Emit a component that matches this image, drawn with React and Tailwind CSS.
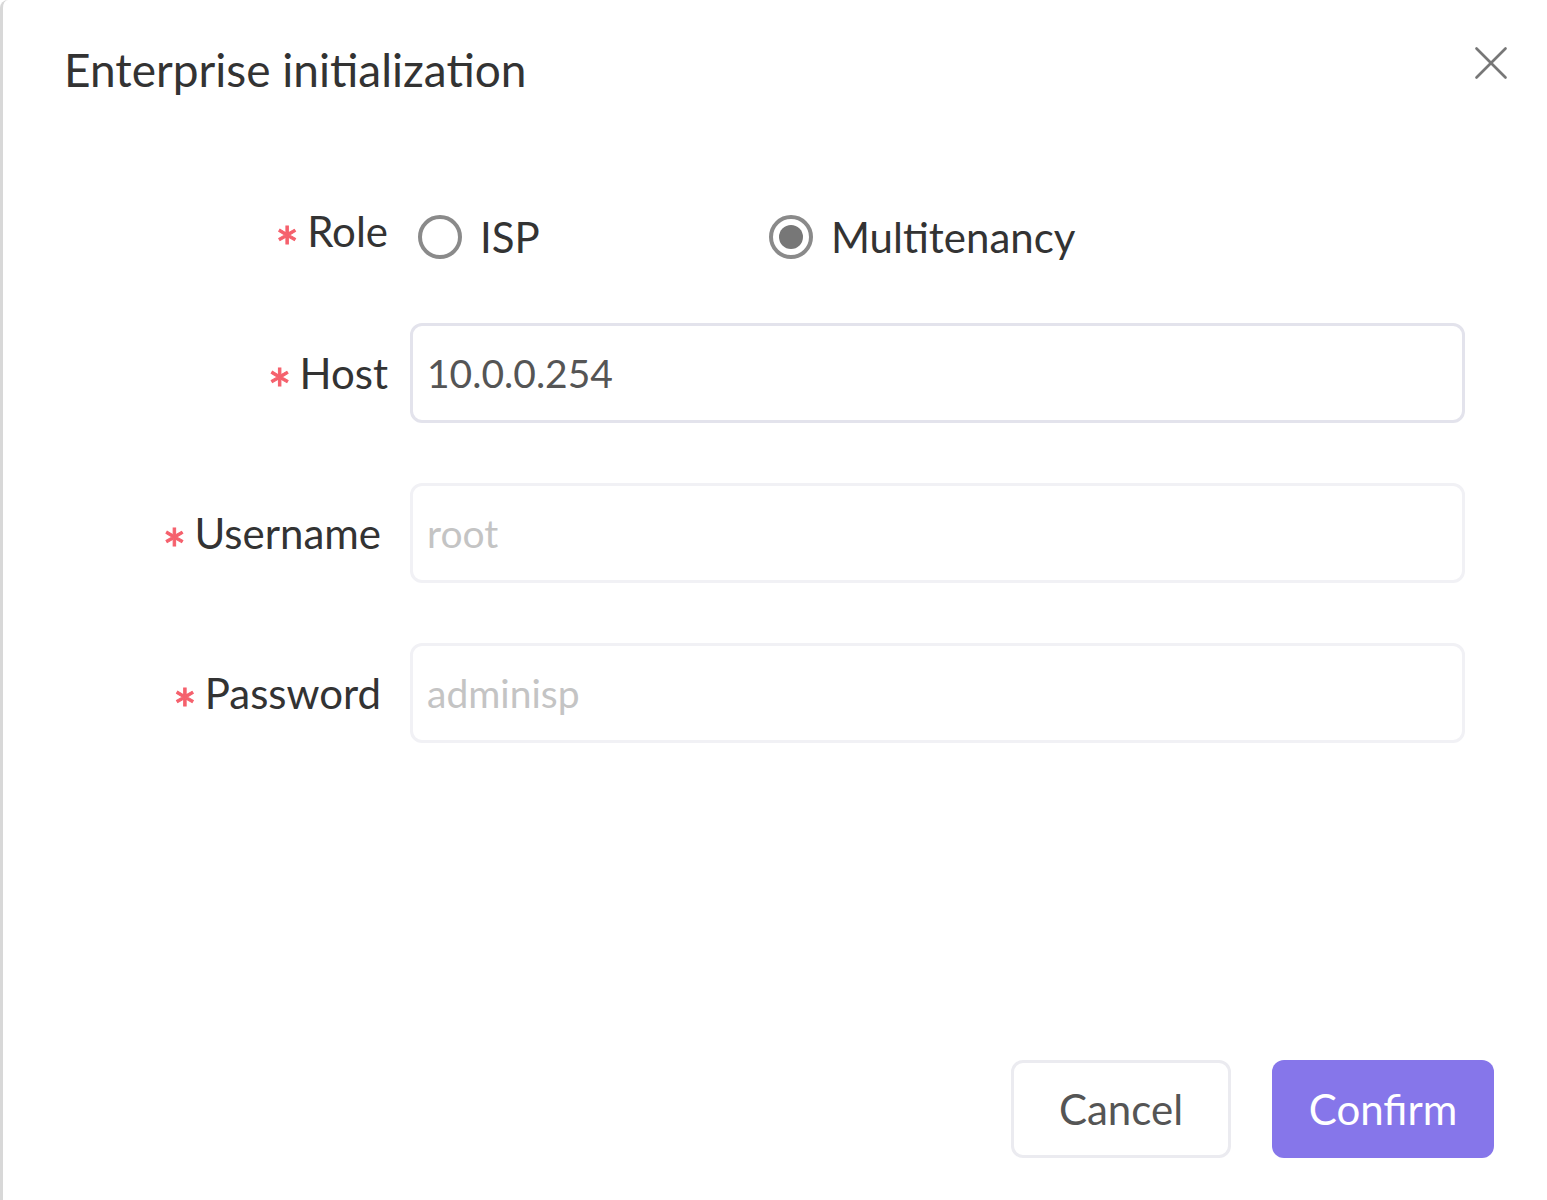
import { X } from 'lucide-react';

const inputBase =
    'flex-1 h-[100px] rounded-xl border-[3px] bg-white px-[14px] text-[39px] outline-none';

function Label({ children, pr = 'pr-[22px]' }) {
    return (
        <div className={`w-[407px] shrink-0 flex justify-end items-center ${pr}`}>
            <span className="text-[#f5616d] text-[56px] leading-none mr-[8px] translate-y-[16px] [-webkit-text-stroke:1px_#f5616d]">*</span>
            <span className="text-[42px] text-[#333]">{children}</span>
        </div>
    );
}

function Radio({ checked, label }) {
    return (
        <label className="flex items-center gap-[18px]">
            <span className="w-[44px] h-[44px] rounded-full border-[4px] border-[#8a8a8a] bg-white flex items-center justify-center">
                {checked && <span className="w-[24px] h-[24px] rounded-full bg-[#777]" />}
            </span>
            <span className="text-[42px] text-[#333]">{label}</span>
        </label>
    );
}

export default function App() {
    return (
        <div
            className="w-[1547px] h-[1200px] bg-white border-l-[3px] border-[#d8d8d8] rounded-tl-lg overflow-hidden flex flex-col"
            style={{ fontFamily: 'Lato, "Open Sans", sans-serif' }}
        >
            <div className="flex items-start justify-between pl-[61px] pr-[27px] pt-[40px]">
                <h2 className="text-[46px] text-[#333] leading-[60px]">Enterprise initialization</h2>
                <button className="-mt-[6px] text-[#777]">
                    <X className="w-[58px] h-[58px]" strokeWidth={1.1} />
                </button>
            </div>

            <div className="flex flex-col pr-[82px] mt-[97px]">
                <div className="flex items-center h-[80px]">
                    <div className="-translate-y-[6px]">
                        <Label>Role</Label>
                    </div>
                    <div className="flex items-center ml-[8px]">
                        <div className="w-[351px]">
                            <Radio label="ISP" />
                        </div>
                        <Radio checked label="Multitenancy" />
                    </div>
                </div>

                <div className="flex items-center mt-[46px]">
                    <Label>Host</Label>
                    <input
                        className={`${inputBase} border-[#e3e3ec] text-[#555]`}
                        defaultValue="10.0.0.254"
                    />
                </div>

                <div className="flex items-center mt-[60px]">
                    <Label pr="pr-[29px]">Username</Label>
                    <input
                        className={`${inputBase} border-[#f1f1f5] placeholder:text-[#c4c4c4]`}
                        placeholder="root"
                    />
                </div>

                <div className="flex items-center mt-[60px]">
                    <Label pr="pr-[29px]">Password</Label>
                    <input
                        className={`${inputBase} border-[#f1f1f5] placeholder:text-[#c4c4c4]`}
                        placeholder="adminisp"
                    />
                </div>
            </div>

            <div className="flex justify-end gap-[41px] pr-[53px] mt-auto mb-[42px]">
                <button className="w-[220px] h-[98px] rounded-xl border-[3px] border-[#ebebf0] bg-white text-[42px] text-[#555]">
                    Cancel
                </button>
                <button className="w-[222px] h-[98px] rounded-xl bg-[#8676ea] text-[42px] text-white">
                    Confirm
                </button>
            </div>
        </div>
    );
}
